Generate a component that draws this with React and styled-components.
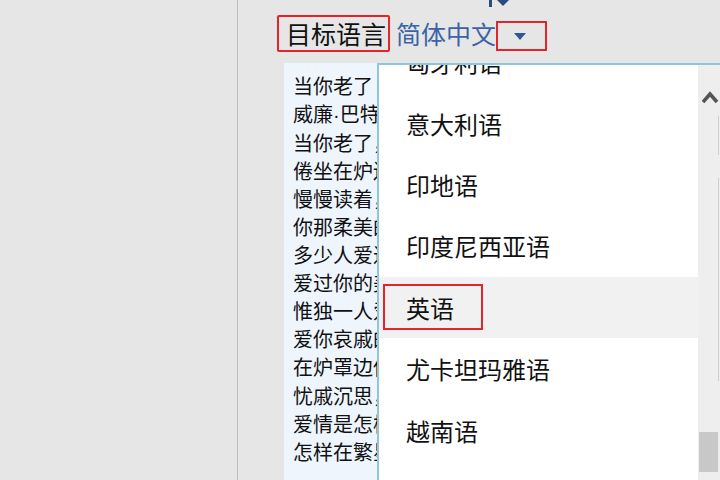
import React from "react";
import styled, { createGlobalStyle } from "styled-components";

const GlobalStyle = createGlobalStyle`
  html, body { margin: 0; padding: 0; background: #e6e6e6; }
  body { font-family: "Noto Sans CJK SC", "Noto Sans", sans-serif; }
  * { box-sizing: border-box; }
`;

const Page = styled.div`
  display: flex;
  width: 720px;
  height: 480px;
  overflow: hidden;
  background: #e6e6e6;
`;

const Sidebar = styled.div`
  width: 238px;
  flex: none;
  border-right: 1px solid #bcbcbc;
`;

const Main = styled.div`
  position: relative;
  flex: 1;
  display: flex;
  flex-direction: column;
  padding-left: 39px;
  min-width: 0;
`;

const TopStrip = styled.div`
  height: 8px;
  padding-left: 212px;
  display: flex;
  align-items: flex-start;
`;

const Header = styled.div`
  display: flex;
  align-items: flex-end;
  margin-top: 7px;
  height: 37px;
`;

const FieldLabel = styled.div`
  height: 37px;
  padding: 0 2px 0 7px;
  border: 2px solid #e5232b;
  border-radius: 2px;
  font-size: 25px;
  line-height: 33px;
  color: #111;
`;

const FieldValue = styled.div`
  margin-left: 6px;
  align-self: center;
  font-size: 25px;
  line-height: 33px;
  color: #3b63a6;
`;

const CaretBox = styled.div`
  width: 51px;
  height: 30px;
  margin-left: 0;
  margin-bottom: 1px;
  border: 2px solid #e5232b;
  display: flex;
  align-items: center;
  justify-content: center;
  padding-right: 4px;
`;

const Caret = styled.div`
  width: 0;
  height: 0;
  border-left: 6px solid transparent;
  border-right: 6px solid transparent;
  border-top: 7px solid #2d5597;
`;

const TextPanel = styled.div`
  margin-top: 11px;
  margin-left: 7px;
  width: 94px;
  flex: 1;
  background: #eef5fd;
  padding: 9px 0 0 9px;
  font-size: 20px;
  line-height: 28.05px;
  color: #111;
  white-space: nowrap;
  overflow: hidden;
`;

const Line = styled.div``;

const Dot = styled.span`
  font-family: "Liberation Sans", sans-serif;
`;

const Dropdown = styled.div`
  position: absolute;
  left: 139px;
  top: 63px;
  right: 0;
  bottom: 0;
  display: flex;
  border-top: 2px solid #8fc6dc;
  border-left: 2px solid #8fc6dc;
  background: #fff;
`;

const List = styled.div`
  flex: 1;
  overflow: hidden;
  background: #fff;
`;

const ListInner = styled.div`
  margin-top: -34px;
`;

const Item = styled.div`
  height: 61.4px;
  display: flex;
  align-items: center;
  padding-left: 4px;
  background: ${(p) => (p.$active ? "#f1f1f1" : "#fff")};
`;

const ItemText = styled.span`
  display: flex;
  align-items: center;
  width: 100px;
  height: 46px;
  padding-left: 21px;
  border: 2px solid ${(p) => (p.$marked ? "#e5232b" : "transparent")};
  font-size: 24px;
  color: #111;
  white-space: nowrap;
`;

const Scrollbar = styled.div`
  position: relative;
  width: 22px;
  flex: none;
  background: #eeeeee;
`;

const UpArrow = styled.svg`
  position: absolute;
  left: 4px;
  top: 24px;
`;

const TrackLine = styled.div`
  position: absolute;
  left: 20px;
  width: 1px;
  background: #cfcfcf;
  top: ${(p) => p.$top}px;
  height: ${(p) => p.$h}px;
`;

const Thumb = styled.div`
  position: absolute;
  left: 1px;
  top: 367px;
  width: 19px;
  height: 40px;
  background: #c8c8c8;
`;

const poem = [
  "当你老了",
  null,
  "当你老了，头发花白，睡意沉沉，",
  "倦坐在炉边，取下这本书来，",
  "慢慢读着，追梦当年的眼神",
  "你那柔美的神采与深幽的晕影。",
  "多少人爱过你青春的片影，",
  "爱过你的美貌，以虚伪或真情，",
  "惟独一人爱你那朝圣者的心，",
  "爱你哀戚的脸上岁月的留痕。",
  "在炉罩边低眉弯腰，",
  "忧戚沉思，喃喃而语，",
  "爱情是怎样逝去，又怎样步上群山，",
  "怎样在繁星之间藏住了脸。",
];

const languages = [
  "匈牙利语",
  "意大利语",
  "印地语",
  "印度尼西亚语",
  "英语",
  "尤卡坦玛雅语",
  "越南语",
];

export default function App() {
  return (
    <>
      <GlobalStyle />
      <Page>
        <Sidebar />
        <Main>
          <TopStrip>
            <svg width="22" height="8" viewBox="0 0 22 8">
              <rect x="0" y="0" width="3" height="7" fill="#2c4a7a" />
              <path d="M8 0 L20 0 L14 6 Z" fill="#2c4a7a" />
            </svg>
          </TopStrip>
          <Header>
            <FieldLabel>目标语言</FieldLabel>
            <FieldValue>简体中文</FieldValue>
            <CaretBox>
              <Caret />
            </CaretBox>
          </Header>
          <TextPanel>
            {poem.map((l, i) =>
              l === null ? (
                <Line key={i}>
                  威廉<Dot>·</Dot>巴特勒<Dot>·</Dot>叶芝
                </Line>
              ) : (
                <Line key={i}>{l}</Line>
              )
            )}
          </TextPanel>
          <Dropdown>
            <List>
              <ListInner>
                {languages.map((lang) => (
                  <Item key={lang} $active={lang === "英语"}>
                    <ItemText $marked={lang === "英语"}>{lang}</ItemText>
                  </Item>
                ))}
              </ListInner>
            </List>
            <Scrollbar>
              <UpArrow width="18" height="16" viewBox="0 0 18 16">
                <path d="M1 13 L8 5 L15 13" fill="none" stroke="#555" strokeWidth="3.6" />
              </UpArrow>
              <TrackLine $top={51} $h={39} />
              <TrackLine $top={113} $h={203} />
              <Thumb />
            </Scrollbar>
          </Dropdown>
        </Main>
      </Page>
    </>
  );
}
